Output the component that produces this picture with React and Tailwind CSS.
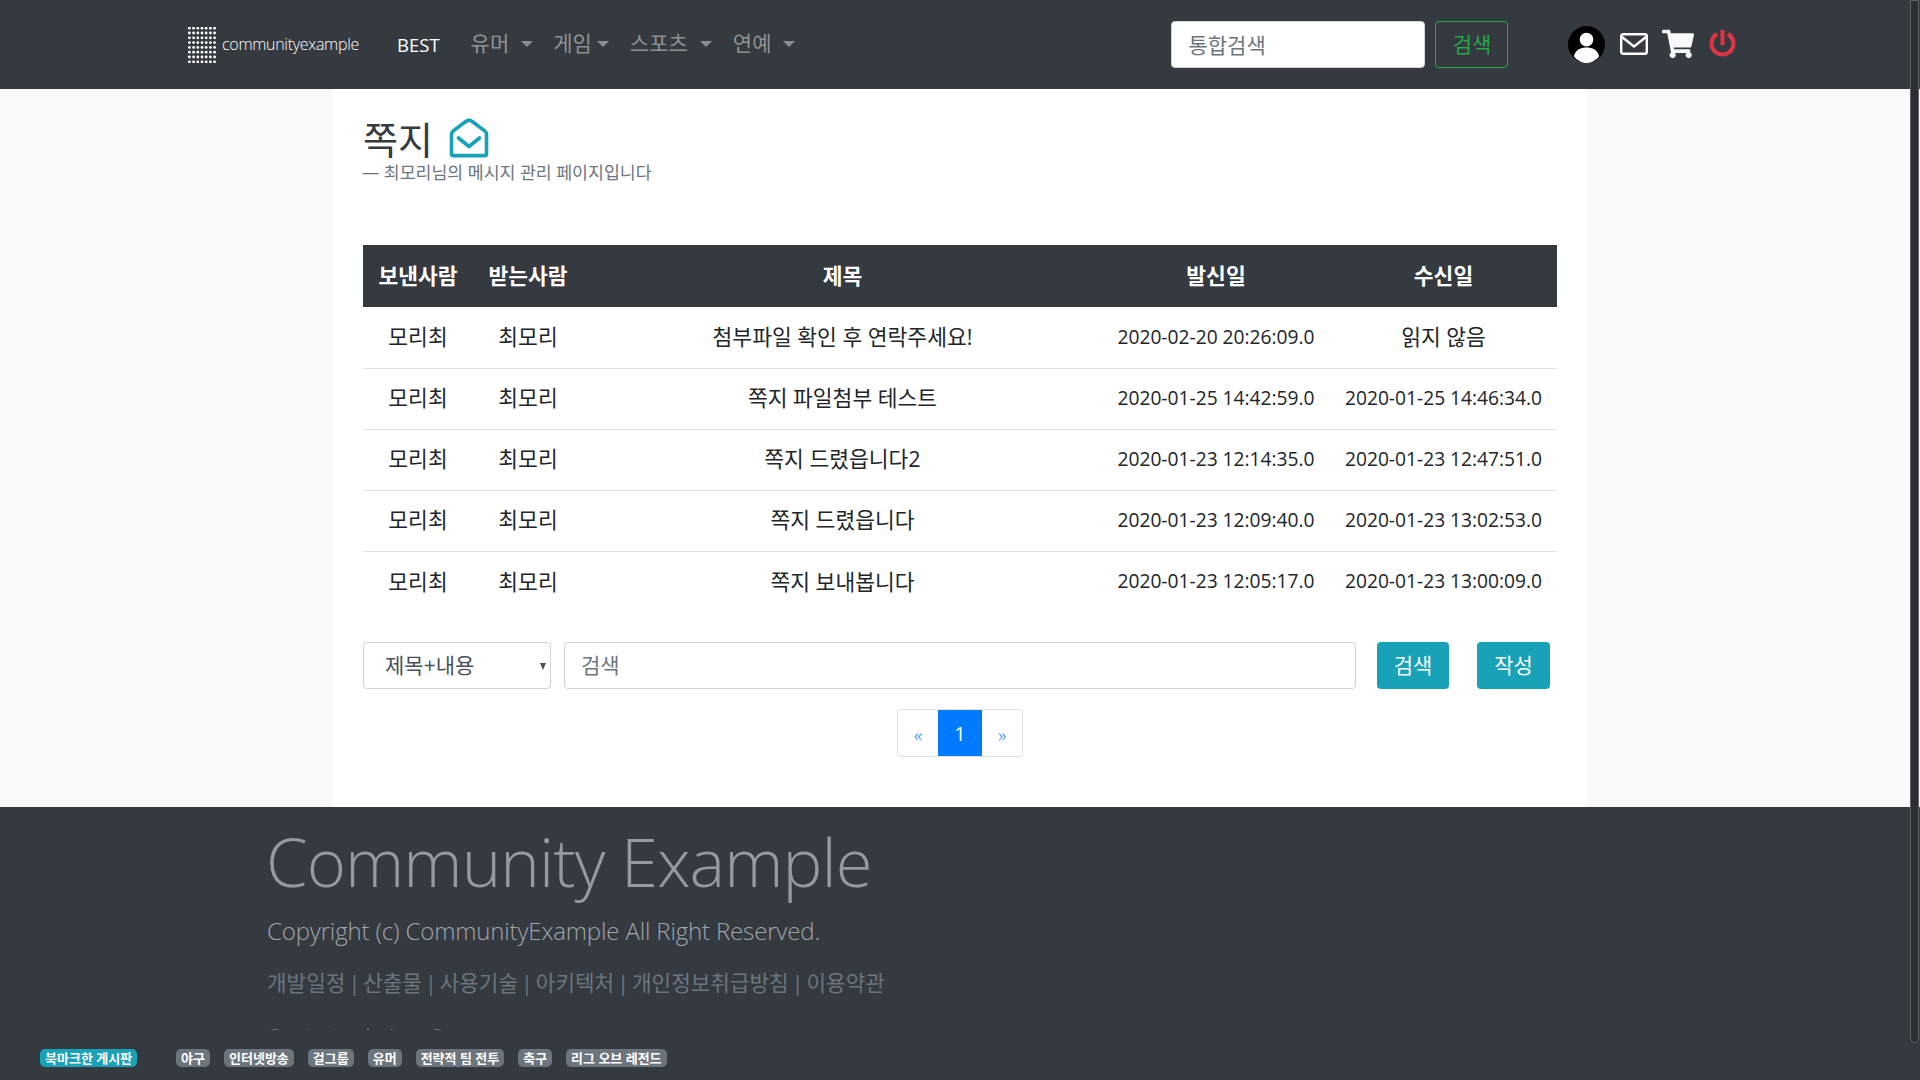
import { FaShoppingCart, FaPowerOff } from "react-icons/fa";

const rows = [
  ["첨부파일 확인 후 연락주세요!", "2020-02-20 20:26:09.0", "읽지 않음"],
  ["쪽지 파일첨부 테스트", "2020-01-25 14:42:59.0", "2020-01-25 14:46:34.0"],
  ["쪽지 드렸읍니다2", "2020-01-23 12:14:35.0", "2020-01-23 12:47:51.0"],
  ["쪽지 드렸읍니다", "2020-01-23 12:09:40.0", "2020-01-23 13:02:53.0"],
  ["쪽지 보내봅니다", "2020-01-23 12:05:17.0", "2020-01-23 13:00:09.0"],
];

const tags = ["야구", "인터넷방송", "걸그룹", "유머", "전략적 팀 전투", "축구", "리그 오브 레전드"];

function Caret() {
  return <span className="ml-3 inline-block border-x-[6px] border-t-[6px] border-x-transparent border-t-[#8a8d90]" />;
}

function Logo() {
  const dots = [];
  for (let y = 0; y < 8; y++) for (let x = 0; x < 7; x++) dots.push(<circle key={`${x}-${y}`} cx={x * 4.2 + 1.4} cy={y * 4.8 + 1.2} r="1.4" fill="#fff" />);
  return <svg width="28" height="36" viewBox="0 0 28 36">{dots}</svg>;
}

export default function App() {
  return (
    <div className="relative h-[1080px] overflow-hidden bg-[#f8f9fa] text-[#212529] font-['Open_Sans','Noto_Sans_CJK_KR',sans-serif]">
      <nav className="flex h-[89px] items-center bg-[#343a40] pl-[188px]">
        <Logo />
        <span className="ml-[6px] -mt-[2px] w-[140px] text-base font-light tracking-[-0.3px] text-white">communityexample</span>
        <span className="ml-[35px] text-[18.5px] font-medium text-white">BEST</span>
        <span className="ml-[31px] -mt-[2px] flex items-center text-[21px] text-[#8f9294]">유머<Caret /></span>
        <span className="ml-[20px] -mt-[2px] flex items-center text-[21px] text-[#8f9294]">게임<span className="ml-[5px] inline-block border-x-[6px] border-t-[6px] border-x-transparent border-t-[#8a8d90]" /></span>
        <span className="ml-[21px] -mt-[2px] flex items-center text-[21px] text-[#8f9294]">스포츠<Caret /></span>
        <span className="ml-[21px] -mt-[2px] flex items-center text-[21px] text-[#8f9294]">연예<Caret /></span>
        <input placeholder="통합검색" className="ml-[376px] h-[47px] w-[254px] rounded-[4px] border border-[#ced4da] bg-white px-4 text-[21px] placeholder:text-[#6c757d]" />
        <button className="ml-[10px] h-[47px] w-[73px] rounded-[4px] border border-[#28a745] text-[21px] text-[#28a745]">검색</button>
        <svg className="ml-[60px]" width="37" height="37" viewBox="0 0 38 38">
          <circle cx="19" cy="19" r="19" fill="#000" />
          <circle cx="19" cy="14" r="7" fill="#fff" />
          <path d="M6 31c2-7 7-9 13-9s11 2 13 9c-3 4-8 7-13 7s-10-3-13-7z" fill="#fff" />
        </svg>
        <svg className="ml-[15px] -mt-[2px]" width="28" height="22" viewBox="0 0 28 22" fill="none" stroke="#fff" strokeWidth="2.4">
          <rect x="1.2" y="1.2" width="25.6" height="19.6" rx="2" />
          <path d="M2 4l12 9.5L26 4" strokeLinejoin="round" />
        </svg>
        <FaShoppingCart className="ml-[14px] -mt-[2px] text-[32px] text-[#f8f9fa]" />
        <FaPowerOff className="ml-[15px] -mt-[2px] text-[27px] text-[#dc3545]" />
      </nav>

      <main className="mx-auto h-[718px] w-[1254px] bg-white px-[30px] pt-[31px]">
        <div className="flex h-[38px] items-center">
          <h1 className="text-[38px] leading-none text-[#343a40]">쪽지</h1>
          <svg className="ml-[16px] -mt-[3px]" width="40" height="40" viewBox="0 0 40 40" fill="none" stroke="#17a2b8" strokeWidth="3.6" strokeLinejoin="round" strokeLinecap="round">
            <path d="M2.5 16.5c0-1.5.6-2.6 1.8-3.6l12.8-9.6c1.8-1.2 4-1.2 5.8 0l12.8 9.6c1.2 1 1.8 2.1 1.8 3.6V36c0 1-.6 1.6-1.6 1.6H4.1c-1 0-1.6-.6-1.6-1.6z" />
            <path d="M9.5 20l10.5 8.5L30.5 20" />
          </svg>
        </div>
        <p className="-ml-[1px] mt-[3px] text-[17.3px] leading-6 text-[#6c757d]">— 최모리님의 메시지 관리 페이지입니다</p>

        <table className="mt-[60px] w-[1194px] table-fixed border-collapse text-center text-[21.5px]">
          <thead className="bg-[#343a40] text-white">
            <tr className="h-[62px] font-bold">
              <th className="w-[110px] font-bold">보낸사람</th>
              <th className="w-[110px] font-bold">받는사람</th>
              <th className="w-[519px] font-bold">제목</th>
              <th className="w-[228px] font-bold">발신일</th>
              <th className="font-bold">수신일</th>
            </tr>
          </thead>
          <tbody>
            {rows.map((r, i) => (
              <tr key={i} className={`h-[61px] ${i < 4 ? "border-b border-[#dee2e6]" : ""}`}>
                <td>모리최</td>
                <td>최모리</td>
                <td>{r[0]}</td>
                <td className="text-[19.2px]">{r[1]}</td>
                <td className={i === 0 ? "" : "text-[19.2px]"}>{r[2]}</td>
              </tr>
            ))}
          </tbody>
        </table>

        <div className="mt-[30px] flex h-[47px]">
          <div className="relative flex w-[188px] items-center rounded-[4px] border border-[#ced4da] pl-[21px] text-[21px] text-[#495057]">
            제목+내용
            <span className="absolute right-[4px] top-[20px] border-x-[3px] border-t-[7px] border-x-transparent border-t-[#495057]" />
          </div>
          <input placeholder="검색" className="ml-[13px] w-[792px] rounded-[4px] border border-[#ced4da] px-4 text-[21px] placeholder:text-[#6c757d]" />
          <button className="ml-[21px] w-[72px] rounded-[4px] bg-[#17a2b8] text-[21px] text-white">검색</button>
          <button className="ml-[28px] w-[73px] rounded-[4px] bg-[#17a2b8] text-[21px] text-white">작성</button>
        </div>

        <div className="mt-[20px] flex justify-center">
          <div className="flex h-[48px] overflow-hidden rounded-[4px] border border-[#dee2e6] text-[#007bff]">
            <span className="flex w-[40px] items-center justify-center pt-1 text-[19px] font-light">«</span>
            <span className="flex w-[44px] items-center justify-center bg-[#007bff] pt-[2px] text-[20px] text-white">1</span>
            <span className="flex w-[40px] items-center justify-center pt-1 text-[19px] font-light">»</span>
          </div>
        </div>
      </main>

      <footer className="h-[273px] overflow-hidden bg-[#343a40] pl-[266px] text-[#6c757d]">
        <h2 className="mt-[11px] text-[67px] font-light leading-[86px] tracking-[-0.9px] text-[#949a9f]">Community Example</h2>
        <p className="ml-px mt-[9px] text-[24px] font-light tracking-[-0.15px] text-[#a0a5aa]">Copyright (c) CommunityExample All Right Reserved.</p>
        <p className="ml-px mt-[18px] text-[21.3px] [word-spacing:-2.5px]">개발일정 | 산출물 | 사용기술 | 아키텍처 | 개인정보취급방침 | 이용약관</p>
        <p className="ml-px mt-[22px] text-[20px] [word-spacing:3px]">Contact admin : @</p>
      </footer>

      <div className="absolute inset-x-0 bottom-0 flex h-[50px] items-start bg-[#343a40] pl-[40px] pt-[19px] text-[13px] font-bold text-white">
        <span className="mr-[39px] rounded-[5px] bg-[#17a2b8] px-[5px] leading-[18px]">북마크한 게시판</span>
        <div className="flex gap-[14px]">
          {tags.map((t) => (
            <span key={t} className="rounded-[5px] bg-[#6c757d] px-[5px] leading-[18px]">{t}</span>
          ))}
        </div>
      </div>

      <div className="absolute right-[1px] top-0 h-[1043px] w-[9px] rounded-b-full border border-[#5f6367] bg-[#2b2f33]" />
    </div>
  );
}
